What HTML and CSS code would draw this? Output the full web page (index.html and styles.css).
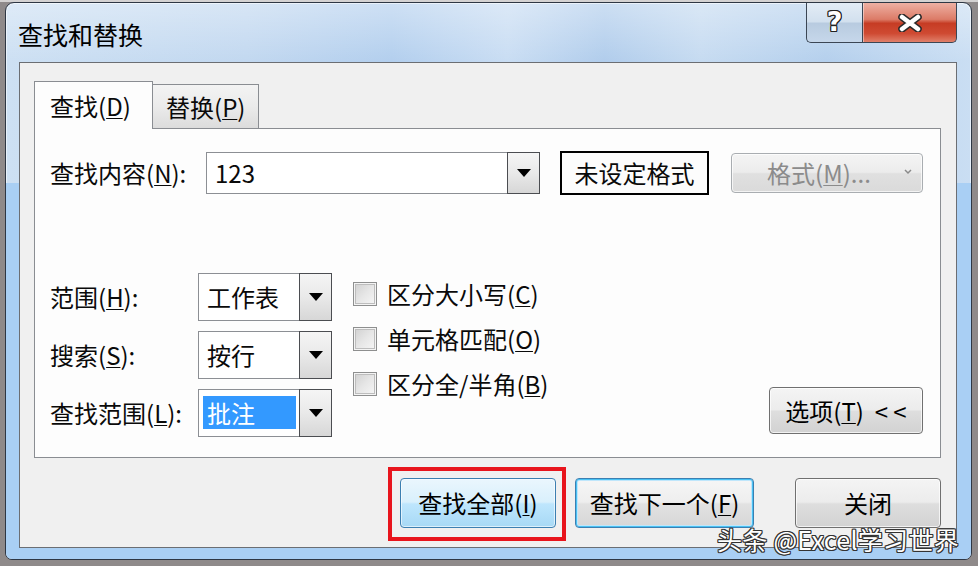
FILE: index.html
```html
<!DOCTYPE html>
<html lang="zh-CN">
<head>
<meta charset="utf-8">
<title>查找和替换</title>
<link rel="stylesheet" href="styles.css">
</head>
<body>
<div class="window">
  <div class="titlebar">
    <div class="title">查找和替换</div>
    <div class="caption-btns">
      <div class="cap-btn help"><span class="cap-glyph">?</span></div>
      <div class="cap-btn close">
        <svg width="24" height="18" viewBox="0 0 24 18">
          <path d="M4 3 L20 15 M20 3 L4 15" stroke="#2a2a2a" stroke-width="7.5" stroke-linecap="round" fill="none"/>
          <path d="M4 3 L20 15 M20 3 L4 15" stroke="#ffffff" stroke-width="4.5" stroke-linecap="round" fill="none"/>
        </svg>
      </div>
    </div>
  </div>

  <div class="client">
    <div class="tabs">
      <div class="tab tab-active">查找(<u>D</u>)</div>
      <div class="tab tab-inactive">替换(<u>P</u>)</div>
    </div>

    <div class="panel">
      <div class="row-find">
        <div class="lbl lbl-find">查找内容(<u>N</u>):</div>
        <div class="combo combo-find">
          <span class="combo-text">123</span>
          <span class="drop"><span class="tri"></span></span>
        </div>
        <div class="fmt-preview">未设定格式</div>
        <div class="btn btn-disabled fmt-btn">
          <span>格式(<u>M</u>)...</span>
          <svg class="mini-arrow" width="8" height="6" viewBox="0 0 8 6"><path d="M1 1 L4 4 L7 1" stroke="#8a8a8a" stroke-width="1.5" fill="none"/></svg>
        </div>
      </div>

      <div class="options">
        <div class="opt-grid">
          <div class="lbl">范围(<u>H</u>):</div>
          <div class="combo combo-small">
            <span class="combo-text">工作表</span>
            <span class="drop"><span class="tri"></span></span>
          </div>
          <div class="lbl">搜索(<u>S</u>):</div>
          <div class="combo combo-small">
            <span class="combo-text">按行</span>
            <span class="drop"><span class="tri"></span></span>
          </div>
          <div class="lbl">查找范围(<u>L</u>):</div>
          <div class="combo combo-small">
            <span class="combo-text selected">批注</span>
            <span class="drop"><span class="tri"></span></span>
          </div>
        </div>

        <div class="checks">
          <div class="check"><span class="box"></span><span>区分大小写(<u>C</u>)</span></div>
          <div class="check"><span class="box"></span><span>单元格匹配(<u>O</u>)</span></div>
          <div class="check"><span class="box"></span><span>区分全/半角(<u>B</u>)</span></div>
        </div>

        <div class="btn opt-btn">选项(<u>T</u>)&nbsp;&nbsp;&lt; &lt;</div>
      </div>
    </div>

    <div class="actions">
      <div class="marked">
        <div class="btn btn-hot btn-findall">查找全部(<u>I</u>)</div>
      </div>
      <div class="btn btn-default btn-next">查找下一个(<u>F</u>)</div>
      <div class="btn btn-close">关闭</div>
    </div>
  </div>

  <div class="watermark">头条 @Excel学习世界</div>
</div>
</body>
</html>
```

FILE: styles.css
```css
* { box-sizing: border-box; }

html, body {
  margin: 0;
  padding: 0;
}

body {
  width: 978px;
  height: 566px;
  overflow: hidden;
  background: linear-gradient(180deg, #d4d2d2 0, #d4d2d2 2px, #8f8a8a 2px, #8f8a8a 100%);
  font-family: "Noto Sans CJK SC", "Noto Sans", sans-serif;
  font-size: 24px;
  color: #0a0a0a;
}

u { text-decoration-thickness: 1px; text-underline-offset: 2px; }

.window {
  position: relative;
  margin: 2px 0 0 5px;
  width: 967px;
  height: 558px;
  border: 1px solid #2e3744;
  border-radius: 9px 9px 7px 7px;
  background:
    linear-gradient(180deg, rgba(255,255,255,0.35) 0, rgba(255,255,255,0) 58px),
    linear-gradient(90deg, #cde0f3 0%, #c2d8f0 25%, #b3cfee 40%, #c9ddf3 52%, #b1cdec 62%, #c6dbf1 72%, #b5d0ed 85%, #cadef3 100%);
  display: flex;
  flex-direction: column;
  overflow: hidden;
  box-shadow: inset 0 0 0 1px rgba(255,255,255,0.55);
}

.window::before {
  content: "";
  position: absolute;
  left: 0; right: 0; top: 180px; bottom: 0;
  background: #a9cff4;
  z-index: 0;
}

.titlebar {
  position: relative;
  z-index: 1;
  height: 59px;
  flex: none;
  display: flex;
  justify-content: space-between;
  align-items: flex-start;
}

.title {
  padding: 17px 0 0 12px;
  line-height: 28px;
  font-size: 25px;
  color: #000;
}

.caption-btns {
  display: flex;
  margin-right: 14px;
}

.cap-btn {
  height: 40px;
  border: 1px solid #3b4654;
  border-top: none;
  display: flex;
  align-items: center;
  justify-content: center;
}

.help {
  width: 56px;
  border-right: none;
  border-radius: 0 0 0 5px;
  background: linear-gradient(180deg, #e3ecf6 0%, #d2e0ee 48%, #b8cbe0 52%, #c6d7ea 100%);
}

.close {
  width: 95px;
  border-radius: 0 0 5px 0;
  background: linear-gradient(180deg, #eeb0a3 0%, #dc7b67 42%, #c63c24 52%, #cf4a32 78%, #e0806b 100%);
  box-shadow: inset 1px 0 0 rgba(255,255,255,0.45);
}

.cap-glyph {
  font-family: "DejaVu Sans", sans-serif;
  font-weight: bold;
  font-size: 27px;
  line-height: 27px;
  color: #fff;
  text-shadow:
    1px 0 0 #222, -1px 0 0 #222, 0 1px 0 #222, 0 -1px 0 #222,
    1px 1px 0 #222, -1px -1px 0 #222, 1px -1px 0 #222, -1px 1px 0 #222;
  margin-top: -3px;
}

.client {
  position: relative;
  z-index: 1;
  flex: 1;
  margin: 0 14px 11px 13px;
  border: 1px solid #6b6e73;
  background: #f0f0f0;
  padding: 18px 15px 0 14px;
  display: flex;
  flex-direction: column;
}

.tabs {
  display: flex;
  align-items: flex-end;
  height: 47px;
  position: relative;
  z-index: 2;
}

.tab {
  line-height: 1;
  display: flex;
  align-items: center;
  border: 1px solid #8a8d92;
  border-bottom: none;
}

.tab-active {
  width: 119px;
  height: 48px;
  margin-bottom: -1px;
  padding-left: 15px;
  background: #fdfdfd;
}

.tab-inactive {
  width: 106px;
  height: 44px;
  border-left: none;
  padding-left: 13px;
  background: linear-gradient(180deg, #f3f3f3 0%, #ebebeb 50%, #dcdcdc 100%);
}

.panel {
  height: 330px;
  flex: none;
  border: 1px solid #8a8d92;
  background: #fdfdfd;
  padding: 22px 17px 20px 15px;
  display: flex;
  flex-direction: column;
}

.row-find {
  display: flex;
  align-items: center;
  height: 44px;
}

.lbl {
  line-height: 28px;
  white-space: nowrap;
}

.lbl-find {
  width: 156px;
  flex: none;
}

.combo {
  display: flex;
  align-items: stretch;
  border: 1px solid #8c8f94;
  background: #fff;
}

.combo-find {
  width: 334px;
  height: 42px;
}

.combo-text {
  flex: 1;
  display: flex;
  align-items: center;
  padding-left: 8px;
  line-height: 28px;
}

.drop {
  width: 33px;
  flex: none;
  margin: -1px -1px -1px 0;
  border: 1px solid #4b4d51;
  background: linear-gradient(180deg, #f5f5f5 0%, #e9e9e9 50%, #d7d7d7 100%);
  display: flex;
  align-items: center;
  justify-content: center;
}

.tri {
  width: 0;
  height: 0;
  border-left: 7px solid transparent;
  border-right: 7px solid transparent;
  border-top: 8px solid #000;
}

.fmt-preview {
  width: 149px;
  height: 44px;
  margin-left: 20px;
  border: 2px solid #000;
  background: #fcfcfc;
  display: flex;
  align-items: center;
  justify-content: center;
  line-height: 28px;
}

.btn {
  border: 1px solid #707070;
  border-radius: 4px;
  background: linear-gradient(180deg, #f4f4f4 0%, #ececec 48%, #dedede 52%, #d2d2d2 100%);
  box-shadow: inset 0 0 0 1px rgba(255,255,255,0.7);
  display: flex;
  align-items: center;
  justify-content: center;
  line-height: 28px;
  white-space: nowrap;
  color: #000;
}

.btn-disabled {
  border-color: #a9adb1;
  color: #8b8b8b;
  background: linear-gradient(180deg, #f4f4f4 0%, #ececec 48%, #e0e0e0 52%, #dadada 100%);
}

.fmt-btn {
  width: 192px;
  height: 40px;
  margin-left: 22px;
  position: relative;
  padding-right: 16px;
}

.mini-arrow {
  position: absolute;
  right: 10px;
  top: 15px;
}

.options {
  margin-top: 78px;
  display: flex;
  align-items: flex-start;
  flex: 1;
}

.opt-grid {
  display: grid;
  grid-template-columns: 148px 134px;
  grid-auto-rows: 48px;
  row-gap: 10px;
  align-items: center;
}

.combo-small {
  height: 48px;
}

.combo-small .combo-text {
  padding-left: 8px;
}

.combo-text.selected {
  flex: 1;
  margin: 6px 3px 7px 4px;
  padding-left: 4px;
  background: #3399ff;
  color: #fff;
}

.checks {
  margin-left: 21px;
  padding-top: 9px;
  display: flex;
  flex-direction: column;
  gap: 21px;
}

.check {
  display: flex;
  align-items: center;
  height: 24px;
  line-height: 28px;
  white-space: nowrap;
}

.box {
  width: 24px;
  height: 24px;
  flex: none;
  margin-right: 10px;
  border: 1px solid #8e8f8f;
  background: linear-gradient(135deg, #cfcfcf 0%, #e6e6e6 50%, #f7f7f7 100%);
  box-shadow: inset 0 0 0 1px #f4f4f4, inset 0 0 0 2px #bdbdbd;
}

.opt-btn {
  margin-left: auto;
  align-self: flex-end;
  width: 154px;
  height: 47px;
  margin-bottom: 3px;
}

.actions {
  margin-top: 20px;
  display: flex;
  justify-content: flex-end;
  align-items: flex-start;
}

.marked {
  position: relative;
}

.marked::after {
  content: "";
  position: absolute;
  top: -11px;
  left: -12px;
  right: -10px;
  bottom: -13px;
  border: 4px solid #e8141c;
}

.btn-findall {
  width: 156px;
  height: 50px;
}

.btn-hot {
  border-color: #3c7fb1;
  background: linear-gradient(180deg, #eaf6fd 0%, #d9f0fc 48%, #bee6fd 52%, #a7d9f5 100%);
  box-shadow: inset 0 0 0 1px rgba(255,255,255,0.6);
}

.btn-next {
  width: 179px;
  height: 50px;
  margin-left: 19px;
}

.btn-default {
  border-color: #3c7fb1;
  box-shadow: inset 0 0 0 1px #48c1f3, inset 0 0 0 2px #bfe6fb;
  background: linear-gradient(180deg, #f6f6f6 0%, #eeeeee 48%, #e2e2e2 52%, #d6d6d6 100%);
}

.btn-close {
  width: 146px;
  height: 50px;
  margin-left: 41px;
}

.watermark {
  position: absolute;
  right: 12px;
  bottom: 5px;
  z-index: 5;
  font-size: 25px;
  line-height: 30px;
  color: #fff;
  letter-spacing: 0.3px;
  text-shadow:
    1px 0 0 #333, -1px 0 0 #333, 0 1px 0 #333, 0 -1px 0 #333,
    1px 1px 0 #333, -1px -1px 0 #333, 1px -1px 0 #333, -1px 1px 0 #333;
}
```
